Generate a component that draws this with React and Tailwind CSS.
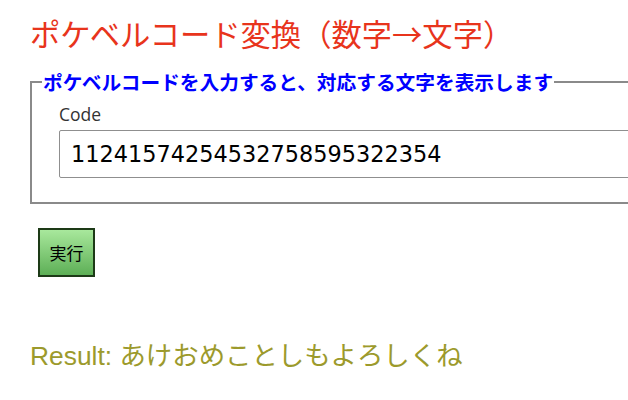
import React, { useState } from 'react';

export default function App() {
  const [code, setCode] = useState('112415742545327585953 22354'.replace(' ', ''));

  return (
    <div className="w-[628px] h-[400px] overflow-hidden bg-white pl-[30px] pt-[13px] font-['Noto_Sans_CJK_JP',sans-serif]">
      {/* Title */}
      <h1 className="text-[30.3px] leading-[40px] text-[#e8341c] font-normal">
        ポケベルコード変換（数字→文字）
      </h1>

      {/* Input panel */}
      <fieldset className="mt-[17px] w-[640px] border-2 border-[#8a8a8a] px-[10px] pb-[24px] pt-0">
        <legend className="px-[1px] text-[19.7px] leading-[24px] font-bold text-[#0000ff]">
          ポケベルコードを入力すると、対応する文字を表示します
        </legend>
        <div className="pl-[17px]">
          <label className="block text-[17.5px] leading-[22px] text-[#333] font-['Open_Sans',sans-serif] mt-[9px]">
            Code
          </label>
          <input
            type="text"
            value={code}
            onChange={(e) => setCode(e.target.value)}
            className="mt-[5px] w-[600px] h-[48px] border border-[#8f8f8f] rounded-[2px] px-[11px] text-[22.4px] text-black font-['DejaVu_Sans',sans-serif] outline-none"
          />
        </div>
      </fieldset>

      {/* Submit */}
      <button className="mt-[24px] ml-[8px] w-[57px] h-[49px] border-2 border-[#1d3a17] bg-gradient-to-b from-[#a8e89c] to-[#5daf56] text-[17px] text-black font-['Noto_Sans_CJK_JP',sans-serif]">
        実行
      </button>

      {/* Result */}
      <p className="mt-[62px] text-[26.4px] leading-[34px] text-[#9c9a2c] font-['Liberation_Sans','Noto_Sans_CJK_JP',sans-serif]">
        Result: あけおめことしもよろしくね
      </p>
    </div>
  );
}
